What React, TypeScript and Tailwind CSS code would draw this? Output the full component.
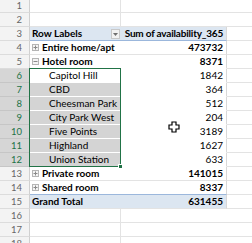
import React from "react";

type Row = {
  n: number;
  a?: React.ReactNode;
  b?: string;
  kind?: "blank" | "header" | "top" | "sub" | "total";
  sign?: "+" | "-";
  active?: boolean;
};

const rows: Row[] = [
  { n: 1, kind: "blank" },
  { n: 2, kind: "blank" },
  { n: 3, kind: "header" },
  { n: 4, kind: "top", a: "Entire home/apt", b: "473732", sign: "+" },
  { n: 5, kind: "top", a: "Hotel room", b: "8371", sign: "-" },
  { n: 6, kind: "sub", a: "Capitol Hill", b: "1842", active: true },
  { n: 7, kind: "sub", a: "CBD", b: "364" },
  { n: 8, kind: "sub", a: "Cheesman Park", b: "512" },
  { n: 9, kind: "sub", a: "City Park West", b: "204" },
  { n: 10, kind: "sub", a: "Five Points", b: "3189" },
  { n: 11, kind: "sub", a: "Highland", b: "1627" },
  { n: 12, kind: "sub", a: "Union Station", b: "633" },
  { n: 13, kind: "top", a: "Private room", b: "141015", sign: "+" },
  { n: 14, kind: "top", a: "Shared room", b: "8337", sign: "+" },
  { n: 15, kind: "total" },
  { n: 16, kind: "blank" },
  { n: 17, kind: "blank" },
  { n: 18, kind: "blank" },
];

function SignBox({ sign }: { sign: "+" | "-" }) {
  return (
    <span className="mr-[3px] ml-[2px] inline-flex h-[7px] w-[7px] items-center justify-center border border-[#b5b5b5] bg-[#f4f4f4]">
      <svg width="5" height="5" viewBox="0 0 5 5">
        <path d="M0.5 2.5H4.5" stroke="#8a8a8a" strokeWidth="1" />
        {sign === "+" && <path d="M2.5 0.5V4.5" stroke="#8a8a8a" strokeWidth="1" />}
      </svg>
    </span>
  );
}

export default function App() {
  return (
    <div
      className="relative h-[243px] w-[252px] overflow-hidden bg-white text-[10px] text-black"
      style={{ fontFamily: "Lato, 'Liberation Sans', sans-serif" }}
    >
      <div className="-mt-[1px] flex flex-col">
        {rows.map((r) => {
          const sel = r.n >= 6 && r.n <= 12;
          const pivot = r.kind !== "blank";
          const blue = r.kind === "header" || r.kind === "total";
          let rowBorder = "border-[#e3e3e3]";
          if (r.kind === "header") rowBorder = "border-[#9bb7dc]";
          if (r.n === 14) rowBorder = "border-[#9bb7dc]";
          if (r.n === 5 || (r.n >= 6 && r.n <= 11)) rowBorder = pivot ? "border-transparent" : rowBorder;
          if (r.n === 12) rowBorder = "border-transparent";
          return (
            <div key={r.n} className="flex h-[14px] leading-[13px]">
              <div
                className={`flex w-[30px] shrink-0 items-center justify-end border-r border-b pr-[7px] text-[9.5px] ${
                  sel
                    ? "border-r-[#217346] border-b-[#c6c6c6] bg-[#d6d6d6] text-[#217346]"
                    : "border-r-[#d0d0d0] border-b-[#dcdcdc] bg-[#f3f3f3] text-[#666666]"
                }`}
              >
                {r.n}
              </div>
              <div
                className={`flex w-[197px] shrink-0 border-b ${rowBorder} ${
                  blue ? "bg-[#dce6f1]" : ""
                } ${r.kind === "blank" ? "" : "border-r border-r-[#d8d8d8]"}`}
              >
                <div
                  className={`relative flex w-[91px] shrink-0 items-center ${
                    r.kind === "blank" ? "border-r border-[#e3e3e3]" : ""
                  } ${sel && !r.active ? "bg-[#d4d4d4]" : ""}`}
                >
                  {r.kind === "header" && (
                    <>
                      <span className="pl-[2px] font-bold">Row Labels</span>
                      <span className="absolute top-[2px] right-[1px] flex h-[10px] w-[9px] items-center justify-center border border-[#c8c8c8] bg-[#f2f2f2]">
                        <svg width="5" height="3" viewBox="0 0 5 3">
                          <path d="M0 0H5L2.5 3Z" fill="#6e6e6e" />
                        </svg>
                      </span>
                    </>
                  )}
                  {r.kind === "top" && (
                    <span className="flex items-center font-bold">
                      <SignBox sign={r.sign!} />
                      {r.a}
                    </span>
                  )}
                  {r.kind === "sub" && <span className="pl-[19px]">{r.a}</span>}
                  {r.kind === "total" && <span className="pl-[2px] font-bold">Grand Total</span>}
                </div>
                <div className="flex flex-1 items-center justify-end pr-[3px]">
                  {r.kind === "header" && (
                    <span className="font-bold tracking-[-0.2px]">Sum of availability_365</span>
                  )}
                  {(r.kind === "top") && <span className="font-bold">{r.b}</span>}
                  {r.kind === "sub" && <span>{r.b}</span>}
                  {r.kind === "total" && <span className="font-bold">631455</span>}
                </div>
              </div>
              <div className="flex-1 border-b border-[#e3e3e3]" />
            </div>
          );
        })}
      </div>
      {/* selection box */}
      <div className="pointer-events-none absolute top-[68px] left-[29px] h-[99px] w-[92px] border border-[#217346]" />
      <div className="absolute top-[164px] left-[118px] h-[5px] w-[5px] border border-white bg-[#217346]" />
      {/* cursor */}
      <svg className="absolute top-[121px] left-[168px]" width="12" height="12" viewBox="0 0 12 12">
        <path
          d="M4 1H8V4H11V8H8V11H4V8H1V4H4Z"
          fill="white"
          stroke="black"
          strokeWidth="1.2"
          strokeLinejoin="miter"
        />
      </svg>
    </div>
  );
}
